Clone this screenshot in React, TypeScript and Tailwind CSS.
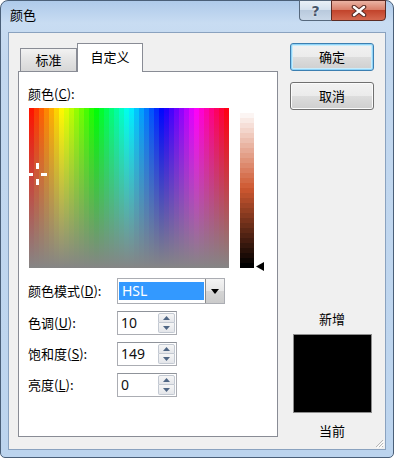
import React from "react";

// hue columns of the colour field, like the dithered bands in the dialog
const HUE_COLS = Array.from({ length: 40 }, (_, i) => ((i + 0.5) / 40) * 360);
// luminance bar for hue 10 / sat 149 (of 240)
const LUM_ROWS = Array.from({ length: 31 }, (_, i) => 97 - (i / 30) * 97);

function Win7Button({ label, primary }: { label: string; primary?: boolean }) {
  return (
    <div
      className={`flex h-[28px] w-[84px] items-center justify-center rounded-[3px] border text-[13px] leading-[16px] text-black bg-[linear-gradient(to_bottom,#f2f2f2_0%,#ebebeb_50%,#dddddd_50%,#cfcfcf_100%)] ${
        primary
          ? "border-[#3c7fb1] shadow-[inset_0_0_0_1px_#8fd3f7,inset_0_0_0_2px_#c8ecfb]"
          : "border-[#707070] shadow-[inset_0_0_0_1px_#fbfbfb]"
      }`}
    >
      {label}
    </div>
  );
}

function SpinArrow({ up }: { up?: boolean }) {
  return (
    <svg width="7" height="4" viewBox="0 0 7 4">
      <path d={up ? "M0 4 L3.5 0 L7 4 Z" : "M0 0 L3.5 4 L7 0 Z"} fill="#4f6684" />
    </svg>
  );
}

function SpinBox({ value }: { value: string }) {
  return (
    <div className="flex h-[24px] w-[60px] items-center border border-[#abadb3] border-t-[#8f939a] bg-white">
      <span className="flex-1 pl-[3px] font-['Noto_Sans',sans-serif] text-[14px] leading-none text-[#111]">
        {value}
      </span>
      <div className="mr-px flex h-[20px] w-[17px] flex-col">
        <div className="flex h-[10px] items-center justify-center rounded-t-[2px] border border-[#c3c9d2] bg-[linear-gradient(to_bottom,#f6f6f6,#e4e6ea)]">
          <SpinArrow up />
        </div>
        <div className="flex h-[10px] items-center justify-center rounded-b-[2px] border border-t-0 border-[#c3c9d2] bg-[linear-gradient(to_bottom,#f6f6f6,#e4e6ea)]">
          <SpinArrow />
        </div>
      </div>
    </div>
  );
}

function Row({ label, hot, children }: { label: string; hot: string; children: React.ReactNode }) {
  return (
    <div className="flex items-center">
      <div className="w-[89px] text-[13px] leading-[16px] text-black">
        {label}(<span className="underline">{hot}</span>):
      </div>
      {children}
    </div>
  );
}

export default function App() {
  return (
    <div className="h-[458px] w-[394px] bg-white font-['Noto_Sans_CJK_SC','Noto_Sans',sans-serif]">
      <div className="flex h-full flex-col rounded-t-[8px] rounded-b-[5px] border border-[#4a5f78] bg-[linear-gradient(to_bottom,#aecaea_0px,#c8dcf2_22px,#c3d8ef_60px,#bcd4ee_100%)] px-[7px] pb-[7px]">
        {/* title bar */}
        <div className="flex h-[31px] items-start">
          <div className="pl-[2px] pt-[6px] text-[13px] leading-[16px] text-black">颜色</div>
          <div className="-mt-px ml-auto flex">
            <div className="flex h-[21px] w-[32px] items-center justify-center rounded-bl-[4px] border border-r-0 border-[#56687d] bg-[linear-gradient(to_bottom,#e9f0f7_0%,#d5e1ee_45%,#b9cadd_50%,#c9d8e8_100%)]">
              <span className="font-['DejaVu_Sans',sans-serif] text-[14px] font-bold leading-none text-[#46556a] [text-shadow:0_0_2px_#fff]">
                ?
              </span>
            </div>
            <div className="flex h-[21px] w-[55px] items-center justify-center rounded-br-[4px] border border-[#5b2b24] bg-[linear-gradient(to_bottom,#eab3a4_0%,#d9806b_45%,#c2442c_50%,#d5684f_100%)]">
              <svg width="16" height="12" viewBox="0 0 16 12">
                <path d="M3 2 L13 10 M13 2 L3 10" stroke="#5a2d26" strokeWidth="4.6" strokeLinecap="round" />
                <path d="M3 2 L13 10 M13 2 L3 10" stroke="#ffffff" strokeWidth="2.4" strokeLinecap="round" />
              </svg>
            </div>
          </div>
        </div>

        {/* client area */}
        <div className="relative flex flex-1 border border-[#8aa2bf] bg-[#f0f0f0] pl-[9px]">
          {/* tabs + panel */}
          <div className="flex w-[260px] flex-col pt-[10px] pb-[12px]">
            <div className="flex h-[28px] items-end pl-[2px]">
              <div className="flex h-[23px] w-[57px] items-center justify-center border border-b-0 border-[#898c95] bg-[linear-gradient(to_bottom,#f2f2f2,#e3e3e3_50%,#d7d7d7)] text-[13px] leading-[16px] text-black">
                标准
              </div>
              <div className="relative z-10 -mb-px flex h-[29px] w-[66px] items-center justify-center border border-b-0 border-[#898c95] bg-white pb-[2px] text-[13px] leading-[16px] text-black">
                自定义
              </div>
            </div>
            <div className="flex flex-1 flex-col border border-[#898c95] bg-white pl-[9px]">
              <div className="mt-[14px] text-[13px] leading-[16px] text-black">
                颜色(<span className="underline">C</span>):
              </div>
              <div className="mt-[6px] flex">
                <div className="relative ml-px flex h-[160px] w-[200px] overflow-hidden">
                  {HUE_COLS.map((h) => (
                    <div
                      key={h}
                      className="h-full w-[5px]"
                      style={{ background: `linear-gradient(to bottom, hsl(${h} 100% 50%), #858585)` }}
                    />
                  ))}
                  {/* crosshair */}
                  <div className="absolute left-[7px] top-[55px] h-[6px] w-[3px] bg-white" />
                  <div className="absolute left-[7px] top-[71px] h-[6px] w-[3px] bg-white" />
                  <div className="absolute left-[-2px] top-[65px] h-[3px] w-[6px] bg-white" />
                  <div className="absolute left-[12px] top-[65px] h-[3px] w-[6px] bg-white" />
                </div>
                <div className="ml-[11px] mt-[5px] flex h-[155px] w-[14px] flex-col">
                  {LUM_ROWS.map((l) => (
                    <div key={l} className="h-[5px] w-full" style={{ background: `hsl(15 62% ${l}%)` }} />
                  ))}
                </div>
                <div className="-mb-[3px] ml-[2px] flex items-end">
                  <svg width="8" height="9" viewBox="0 0 8 9">
                    <path d="M8 0 L0 4.5 L8 9 Z" fill="#000" />
                  </svg>
                </div>
              </div>

              <div className="mt-[10px] flex flex-col gap-[7px]">
                <Row label="颜色模式" hot="D">
                  <div className="flex h-[26px] w-[108px] items-center border border-[#abadb3] bg-white pl-px">
                    <div className="flex h-[18px] flex-1 items-center bg-[#3399ff] pl-[3px] font-['Noto_Sans',sans-serif] text-[14px] leading-none text-white">
                      HSL
                    </div>
                    <div className="ml-px flex h-full w-[19px] items-center justify-center border-l border-[#8c8c8c] bg-[linear-gradient(to_bottom,#f4f4f4,#e6e6e6_50%,#d5d5d5_50%,#cbcbcb)]">
                      <svg width="8" height="5" viewBox="0 0 8 5">
                        <path d="M0 0 L8 0 L4 5 Z" fill="#000" />
                      </svg>
                    </div>
                  </div>
                </Row>
                <Row label="色调" hot="U">
                  <SpinBox value="10" />
                </Row>
                <Row label="饱和度" hot="S">
                  <SpinBox value="149" />
                </Row>
                <Row label="亮度" hot="L">
                  <SpinBox value="0" />
                </Row>
              </div>
            </div>
          </div>

          {/* right column */}
          <div className="ml-[12px] flex w-[84px] flex-col pt-[10px] pb-[10px]">
            <Win7Button label="确定" primary />
            <div className="mt-[11px]">
              <Win7Button label="取消" />
            </div>
            <div className="mt-auto flex flex-col items-center">
              <div className="text-[13px] leading-[16px] text-black">新增</div>
              <div className="mt-[7px] h-[79px] w-[79px] border border-[#8d8d8d] bg-black" />
              <div className="mt-[10px] text-[13px] leading-[16px] text-black">当前</div>
            </div>
          </div>

          {/* size grip */}
          <svg className="absolute bottom-[1px] right-[1px]" width="10" height="10" viewBox="0 0 10 10">
            <path d="M9 2 L2 9 M9 5 L5 9 M9 8 L8 9" stroke="#b7b7b7" strokeWidth="1" />
            <path d="M10 3 L3 10 M10 6 L6 10" stroke="#ffffff" strokeWidth="1" />
          </svg>
        </div>
      </div>
    </div>
  );
}
